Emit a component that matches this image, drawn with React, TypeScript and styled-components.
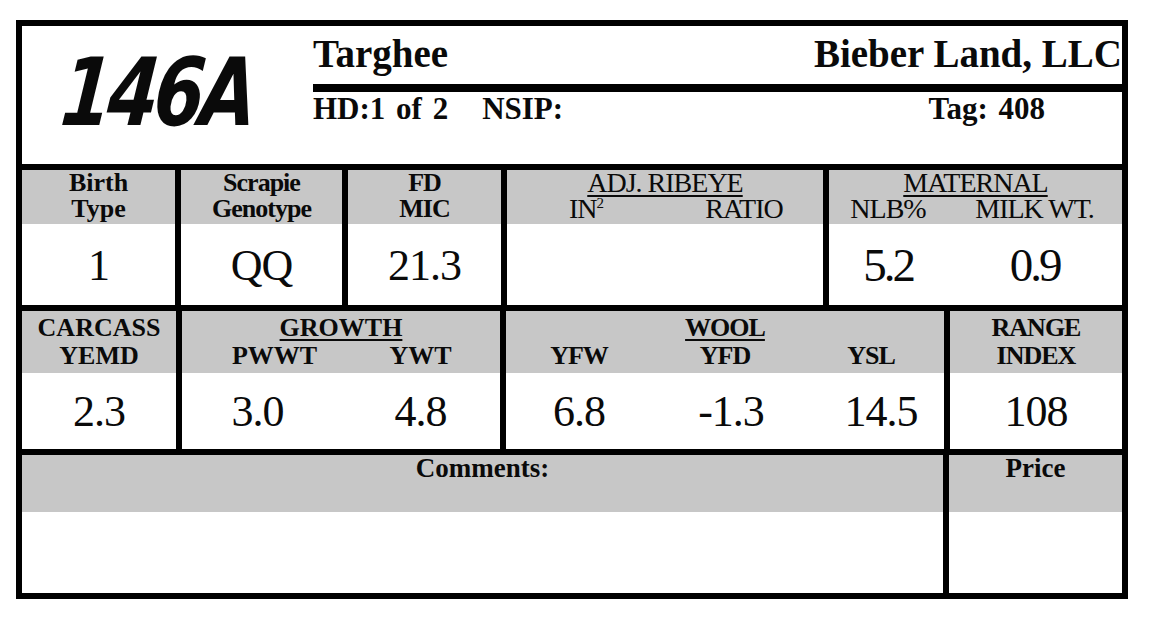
import { createGlobalStyle, styled } from "styled-components";

const GlobalStyle = createGlobalStyle`
    body {
        margin: 0;
        background: #fff;
        color: #0a0a0a;
        font-family: "Liberation Serif", "Times New Roman", serif;
    }
`;

const App = () => {
    return (
        <>
            <GlobalStyle />
            <Page>
                <Card>
                    <Banner>
                        <LotNumber><span>146A</span></LotNumber>
                        <Titles>
                            <TitleRow>
                                <span>Targhee</span>
                                <span>Bieber Land, LLC</span>
                            </TitleRow>
                            <Rule />
                            <InfoRow>
                                <span>HD:1 of 2</span>
                                <Nsip>NSIP:</Nsip>
                                <Tag>Tag: 408</Tag>
                            </InfoRow>
                        </Titles>
                    </Banner>

                    <Row $cols="153px 161px 153px 316px 293px" $h={135}>
                        <Cell>
                            <Label $h={54}>Birth<br />Type</Label>
                            <Value>1</Value>
                        </Cell>
                        <Cell>
                            <Label $h={54} $tight>Scrapie<br />Genotype</Label>
                            <Value>QQ</Value>
                        </Cell>
                        <Cell>
                            <Label $h={54} $tight>FD<br />MIC</Label>
                            <Value>21.3</Value>
                        </Cell>
                        <Cell>
                            <Label $h={54} $light>
                                <Group>ADJ. RIBEYE</Group>
                                <Split $cols="1fr 1fr">
                                    <span>IN<Sup>2</Sup></span>
                                    <span>RATIO</span>
                                </Split>
                            </Label>
                            <Value />
                        </Cell>
                        <Cell>
                            <Label $h={54} $light>
                                <Group>MATERNAL</Group>
                                <Split $cols="118px 1fr">
                                    <span>NLB%</span>
                                    <span>MILK WT.</span>
                                </Split>
                            </Label>
                            <Value>
                                <Split $cols="118px 1fr">
                                    <Narrow>5.2</Narrow>
                                    <Narrow>0.9</Narrow>
                                </Split>
                            </Value>
                        </Cell>
                    </Row>

                    <Row $cols="154px 318px 438px 172px" $h={138}>
                        <Cell>
                            <Label $h={62} $pt={3} $lh={28}>CARCASS<br />YEMD</Label>
                            <Value>2.3</Value>
                        </Cell>
                        <Cell>
                            <Label $h={62} $pt={3} $lh={28}>
                                <Group>GROWTH</Group>
                                <Split $cols="1fr 1fr">
                                    <Shift $dx={13}>PWWT</Shift>
                                    <span>YWT</span>
                                </Split>
                            </Label>
                            <Value>
                                <Split $cols="1fr 1fr">
                                    <Shift $dx={-4}>3.0</Shift>
                                    <span>4.8</span>
                                </Split>
                            </Value>
                        </Cell>
                        <Cell>
                            <Label $h={62} $pt={3} $lh={28} $tight>
                                <Group>WOOL</Group>
                                <Split $cols="1fr 1fr 1fr">
                                    <span>YFW</span>
                                    <span>YFD</span>
                                    <span>YSL</span>
                                </Split>
                            </Label>
                            <Value>
                                <Split $cols="1fr 1fr 1fr">
                                    <span>6.8</span>
                                    <Shift $dx={6}>-1.3</Shift>
                                    <Shift $dx={10}>14.5</Shift>
                                </Split>
                            </Value>
                        </Cell>
                        <Cell>
                            <Label $h={62} $pt={3} $lh={28} $tight>RANGE<br />INDEX</Label>
                            <Value>108</Value>
                        </Cell>
                    </Row>

                    <Row $cols="921px 173px" $h={138}>
                        <Cell>
                            <Label $h={57} $lh={27} $size={27}>Comments:</Label>
                            <Value />
                        </Cell>
                        <Cell>
                            <Label $h={57} $lh={27} $size={27}>Price</Label>
                            <Value />
                        </Cell>
                    </Row>
                </Card>
            </Page>
        </>
    )
}

const Page = styled.main`
    padding: 20px 0 0 16px;
`

const Card = styled.section`
    box-sizing: border-box;
    width: 1112px;
    height: 579px;
    padding: 6px;
    background: #000;

    display: flex;
    flex-direction: column;
    gap: 6px;
`

const Banner = styled.header`
    height: 138px;
    flex-shrink: 0;
    background: #fff;

    display: grid;
    grid-template-columns: 291px 1fr;
`

/* brush lettering of the lot number: narrowed, slanted bold */
const LotNumber = styled.div`
    display: flex;
    align-items: center;
    padding-left: 40px;
    padding-bottom: 4px;
    font-family: "DejaVu Sans Condensed", "DejaVu Sans", sans-serif;
    font-weight: 700;
    font-style: italic;
    font-size: 94px;
    letter-spacing: -5px;
    line-height: 1;

    span {
        display: inline-block;
        transform: scaleX(0.86) skewX(-6deg);
        transform-origin: left center;
    }
`

const Titles = styled.div`
    display: flex;
    flex-direction: column;
    padding-top: 9px;
`

const TitleRow = styled.div`
    display: flex;
    justify-content: space-between;
    font-size: 39px;
    font-weight: 700;
    line-height: 38px;
`

const Rule = styled.div`
    height: 8px;
    margin-top: 11px;
    background: #000;
`

const InfoRow = styled.div`
    display: flex;
    margin-top: 2px;
    font-size: 31px;
    font-weight: 700;
    line-height: 30px;
    word-spacing: 3px;
`

const Nsip = styled.span`
    margin-left: 34px;
`

const Tag = styled.span`
    margin-left: auto;
    margin-right: 77px;
`

const Row = styled.div<{ $cols: string; $h: number }>`
    height: ${p => p.$h}px;
    flex-shrink: 0;
    display: grid;
    grid-template-columns: ${p => p.$cols};
    gap: 6px;
`

const Cell = styled.div`
    display: flex;
    flex-direction: column;
    background: #fff;
`

const Label = styled.div<{ $h: number; $pt?: number; $lh?: number; $size?: number; $light?: boolean; $tight?: boolean }>`
    height: ${p => p.$h}px;
    box-sizing: border-box;
    padding-top: ${p => p.$pt ?? 0}px;
    background: #c7c7c7;
    text-align: center;
    font-size: ${p => p.$size ?? (p.$light ? 28 : 26)}px;
    font-weight: ${p => (p.$light ? 400 : 700)};
    line-height: ${p => p.$lh ?? 26}px;
    letter-spacing: ${p => (p.$tight || p.$light ? "-1px" : "0")};
    white-space: nowrap;
`

const Group = styled.div`
    display: inline-block;
    text-decoration: underline;
    text-decoration-thickness: 1.5px;
    text-underline-offset: 3px;
`

const Split = styled.div<{ $cols: string }>`
    display: grid;
    grid-template-columns: ${p => p.$cols};
    width: 100%;
    text-align: center;
`

const Shift = styled.span<{ $dx: number }>`
    position: relative;
    left: ${p => p.$dx}px;
`

const Sup = styled.sup`
    font-size: 15px;
    line-height: 0;
    vertical-align: 10px;
`

const Value = styled.div`
    flex: 1;
    display: flex;
    align-items: center;
    justify-content: center;
    font-size: 44px;
    letter-spacing: -1px;
    line-height: 1;
    padding-top: 2px;
`

const Narrow = styled.span`
    font-size: 47px;
    letter-spacing: -3px;
`

export default App;
